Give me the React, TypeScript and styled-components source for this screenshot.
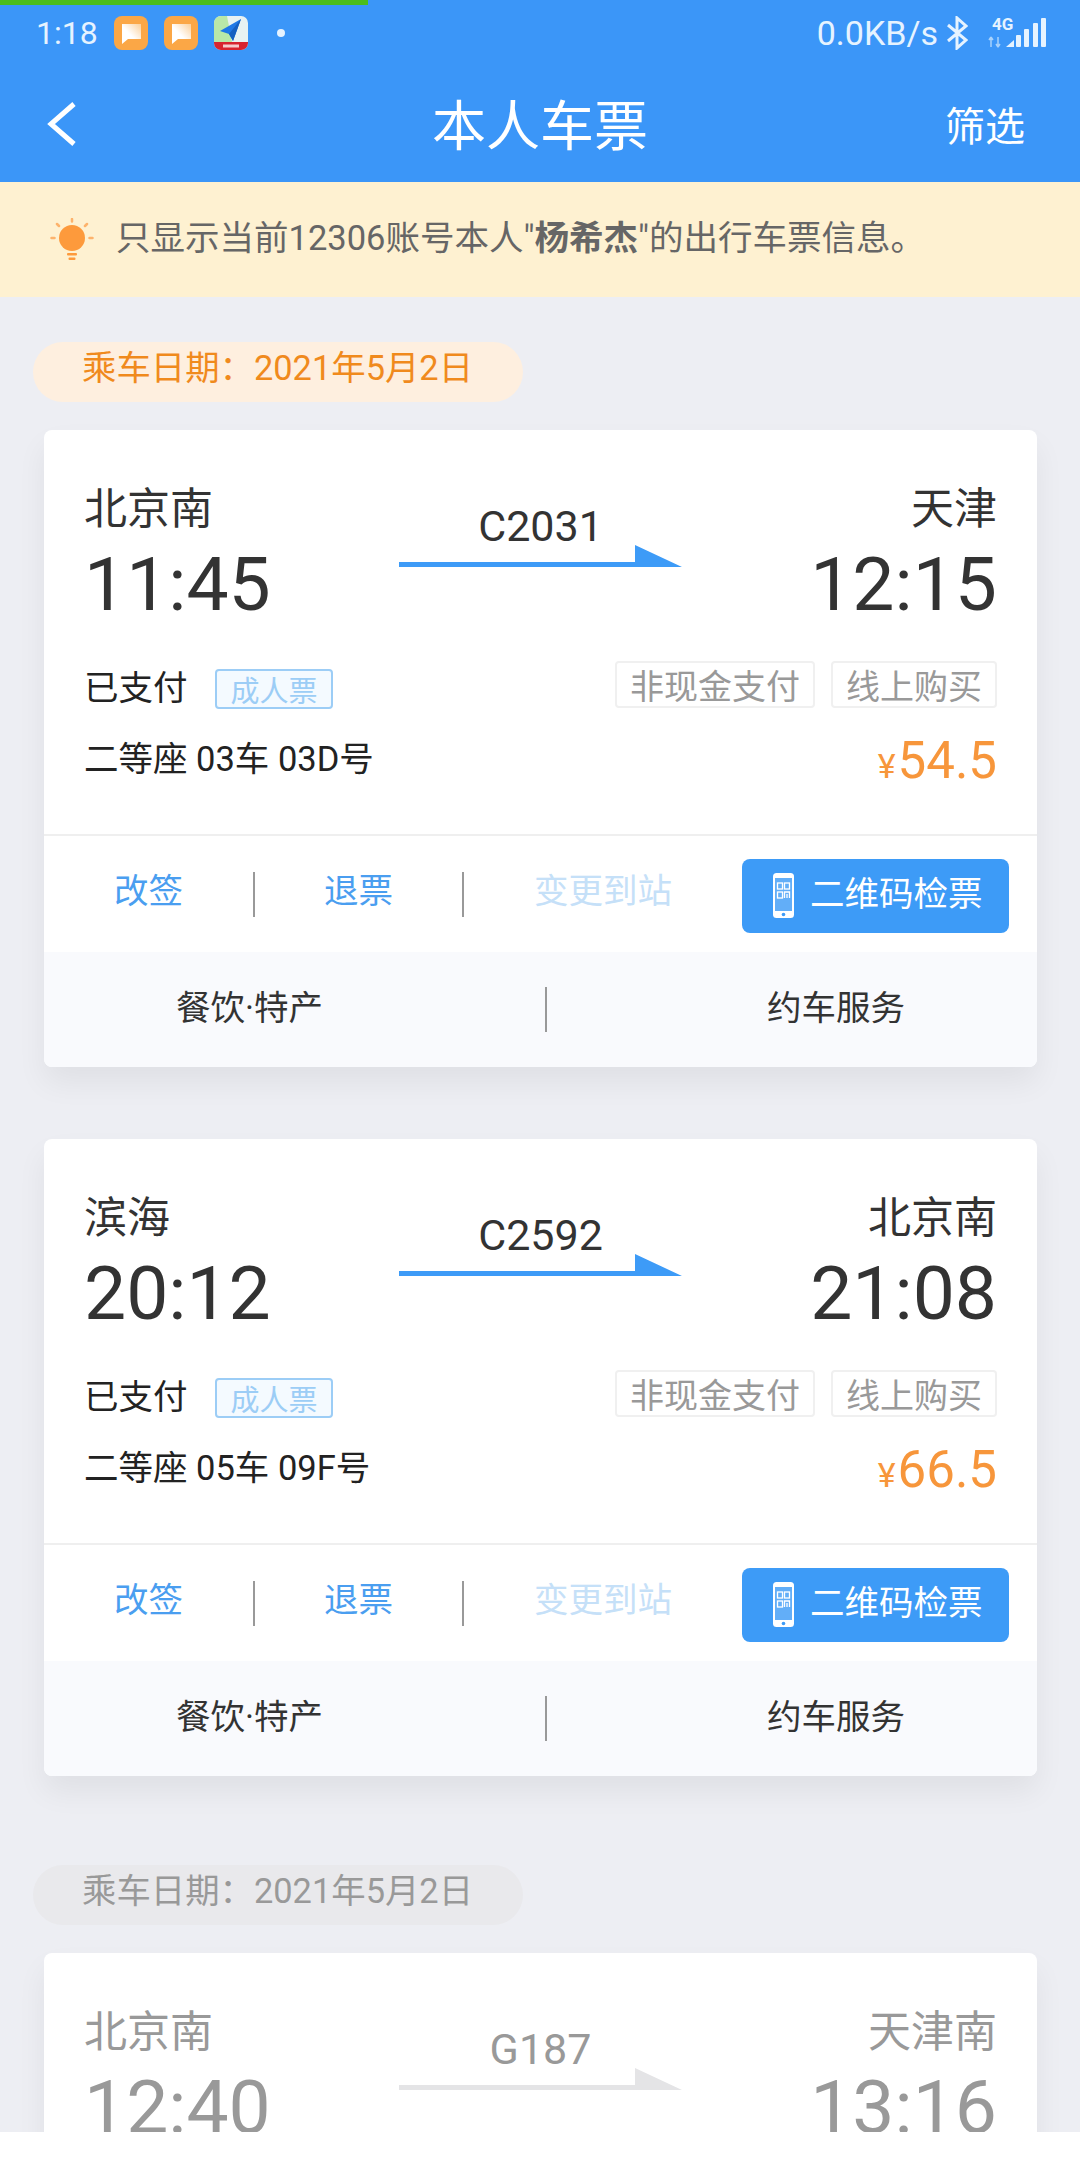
import React from 'react';
import styled, { createGlobalStyle } from 'styled-components';

type Ticket = {
    from: string;
    to: string;
    fromTime: string;
    toTime: string;
    train: string;
    seat?: string;
    price?: string;
};

const tickets: Ticket[] = [
    { from: '北京南', to: '天津', fromTime: '11:45', toTime: '12:15', train: 'C2031', seat: '二等座 03车 03D号', price: '54.5' },
    { from: '滨海', to: '北京南', fromTime: '20:12', toTime: '21:08', train: 'C2592', seat: '二等座 05车 09F号', price: '66.5' },
];

const pastTicket: Ticket = { from: '北京南', to: '天津南', fromTime: '12:40', toTime: '13:16', train: 'G187' };

const AppIcon = ({ plane }: { plane?: boolean }) =>
    plane ? (
        <svg width="34" height="34" viewBox="0 0 34 34">
            <rect width="34" height="34" rx="7" fill="#e8f2f2" />
            <path d="M0 7a7 7 0 0 1 7-7h6L18 26H0z" fill="#b9e8a8" />
            <path d="M0 26h34v1a7 7 0 0 1-7 7H7a7 7 0 0 1-7-7z" fill="#d8232f" />
            <path d="M27 3L6 15l9 3 4 7z" fill="#1f78e6" />
            <path d="M27 3L15 18l4 7z" fill="#155fc0" />
            <rect x="9" y="28.500" width="16" height="3" fill="#f6c9cc" />
        </svg>
    ) : (
        <svg width="34" height="34" viewBox="0 0 34 34">
            <defs>
                <linearGradient id="bubble" x1="0" y1="1" x2="1" y2="0">
                    <stop offset="0.450" stopColor="#fff" />
                    <stop offset="1" stopColor="#fbd09a" />
                </linearGradient>
            </defs>
            <rect width="34" height="34" rx="8" fill="#fba746" />
            <path d="M8 8h19v15H14l-6 5z" fill="url(#bubble)" />
        </svg>
    );

const Bluetooth = () => (
    <svg width="22" height="34" viewBox="0 0 22 34" fill="none" stroke="#e6f3ff" strokeWidth="3">
        <path d="M2 9l18 15-9 8V2l9 8L2 25" />
    </svg>
);

const Signal = () => (
    <svg width="58" height="34" viewBox="0 0 58 34">
        <text x="4" y="14" fontSize="17" fontWeight="700" fontFamily="Roboto" fill="#e6f3ff">
            4G
        </text>
        <path d="M3 31V21M3 21l-2 3M3 21l2 3M10 21v10M10 31l-2-3M10 31l2-3" stroke="#a8d2fb" strokeWidth="1.500" fill="none" />
        <path d="M18 31l8-7v7z" fill="#e6f3ff" />
        <rect x="28" y="19" width="5" height="12" rx="1" fill="#e6f3ff" />
        <rect x="36" y="13" width="5" height="18" rx="1" fill="#e6f3ff" />
        <rect x="45" y="7" width="5" height="24" rx="1" fill="#e6f3ff" />
        <rect x="53" y="2" width="5" height="29" rx="1" fill="#e6f3ff" />
    </svg>
);

const Bulb = () => (
    <svg width="44" height="44" viewBox="0 0 44 44">
        <circle cx="22" cy="20" r="13" fill="#fd9a3c" />
        <rect x="17" y="35" width="10" height="2.500" rx="1" fill="#fd9a3c" />
        <rect x="18.500" y="39.500" width="7" height="2.500" rx="1" fill="#fd9a3c" />
        <g stroke="#fdb36c" strokeWidth="2.500" strokeLinecap="round">
            <path d="M22 1v2.500M1.500 20h3M39.500 20h3M7 6l2 2M37 6l-2 2" />
        </g>
    </svg>
);

const Arrow = ({ color }: { color: string }) => (
    <svg width="283" height="22" viewBox="0 0 283 22">
        <path d="M0 17H236V0L283 22H0Z" fill={color} />
    </svg>
);

const QrPhone = () => (
    <svg width="21" height="45" viewBox="0 0 21 45">
        <rect width="21" height="45" rx="3.500" fill="#fff" />
        <rect x="2" y="5" width="17" height="33" fill="#62aef8" />
        <g fill="none" stroke="#fff" strokeWidth="1.300">
            <rect x="4.500" y="10" width="5" height="6" />
            <rect x="11.500" y="10" width="5" height="6" />
            <rect x="4.500" y="19" width="5" height="6" />
            <path d="M11.500 25v-6h5v6M14 21v4" />
        </g>
        <circle cx="10.500" cy="41.500" r="1.800" fill="#3d9bf7" />
    </svg>
);

const Route = ({ ticket, muted }: { ticket: Ticket; muted?: boolean }) => (
    <RouteRow $muted={muted}>
        <Stop>
            <StationName>{ticket.from}</StationName>
            <Time>{ticket.fromTime}</Time>
        </Stop>
        <Line>
            <TrainNo>{ticket.train}</TrainNo>
            <Arrow color={muted ? '#e4e4e6' : '#3d9bf7'} />
        </Line>
        <Stop $right>
            <StationName>{ticket.to}</StationName>
            <Time>{ticket.toTime}</Time>
        </Stop>
    </RouteRow>
);

const TicketCard = ({ ticket }: { ticket: Ticket }) => (
    <Card>
        <CardBody>
            <Route ticket={ticket} />
            <InfoGrid>
                <StatusLine>
                    <Paid>已支付</Paid>
                    <AdultTag>成人票</AdultTag>
                </StatusLine>
                <GreyTags>
                    <GreyTag>非现金支付</GreyTag>
                    <GreyTag>线上购买</GreyTag>
                </GreyTags>
                <Seat>{ticket.seat}</Seat>
                <Price>
                    <small>¥</small>
                    {ticket.price}
                </Price>
            </InfoGrid>
        </CardBody>
        <Actions>
            <ActionCell $width={211} $divided>
                改签
            </ActionCell>
            <ActionCell $width={209} $divided>
                退票
            </ActionCell>
            <ActionCell $width={278} $disabled>
                变更到站
            </ActionCell>
            <QrButton>
                <QrPhone />
                <span>二维码检票</span>
            </QrButton>
        </Actions>
        <Services>
            <ServiceCell $inset={132} $divided>
                餐饮·特产
            </ServiceCell>
            <ServiceCell $inset={220}>约车服务</ServiceCell>
        </Services>
    </Card>
);

export default function App() {
    return (
        <>
            <GlobalStyle />
            <Screen>
                <Header>
                    <ProgressBar />
                    <StatusBar>
                        <StatusTime>1:18</StatusTime>
                        <AppIcons>
                            <AppIcon />
                            <AppIcon />
                            <AppIcon plane />
                        </AppIcons>
                        <StatusDot />
                        <StatusRight>
                            <NetSpeed>0.0KB/s</NetSpeed>
                            <Bluetooth />
                            <Signal />
                        </StatusRight>
                    </StatusBar>
                    <NavBar>
                        <BackIcon width="30" height="44" viewBox="0 0 30 44" fill="none" stroke="#fff" strokeWidth="5">
                            <path d="M28 2L5 22l23 20" />
                        </BackIcon>
                        <NavTitle>本人车票</NavTitle>
                        <NavAction>筛选</NavAction>
                    </NavBar>
                </Header>
                <Notice>
                    <Bulb />
                    <NoticeText>
                        只显示当前12306账号本人"<b>杨希杰</b>"的出行车票信息。
                    </NoticeText>
                </Notice>
                <List>
                    <DatePill>乘车日期：2021年5月2日</DatePill>
                    {tickets.map((t) => (
                        <TicketCard ticket={t} key={t.train} />
                    ))}
                    <DatePill $muted>乘车日期：2021年5月2日</DatePill>
                    <Card>
                        <CardBody>
                            <Route ticket={pastTicket} muted />
                        </CardBody>
                    </Card>
                </List>
            </Screen>
        </>
    );
}

const GlobalStyle = createGlobalStyle`
    html, body {
        margin: 0;
        padding: 0;
        background: #fff;
        font-family: Roboto, "Noto Sans CJK SC", sans-serif;
    }
`;

const Screen = styled.div`
    width: 1080px;
    height: 2132px;
    overflow: hidden;
    background: #edeef3;
`;

const Header = styled.header`
    position: relative;
    height: 182px;
    background: #3b96f8;
    color: #fff;
`;

const ProgressBar = styled.div`
    position: absolute;
    top: 0;
    left: 0;
    width: 368px;
    height: 5px;
    background: #4bbd1c;
`;

const StatusBar = styled.div`
    display: flex;
    align-items: center;
    height: 66px;
    padding: 0 34px 0 36px;
    color: #e6f3ff;
`;

const StatusTime = styled.span`
    width: 78px;
    font-size: 32px;
`;

const AppIcons = styled.div`
    display: flex;
    gap: 16px;
`;

const StatusDot = styled.i`
    width: 8px;
    height: 8px;
    margin-left: 29px;
    border-radius: 50%;
    background: #e6f3ff;
`;

const StatusRight = styled.div`
    display: flex;
    align-items: center;
    margin-left: auto;

    svg:last-child {
        margin-left: 20px;
    }
`;

const NetSpeed = styled.span`
    margin-right: 8px;
    font-size: 34px;
`;

const NavBar = styled.div`
    display: grid;
    grid-template-columns: 1fr auto 1fr;
    align-items: center;
    height: 116px;
    padding: 0 55px;
`;

const BackIcon = styled.svg`
    margin-left: -9px;
`;

const NavTitle = styled.h1`
    margin: 0 0 3px;
    font-size: 54px;
    font-weight: 400;
`;

const NavAction = styled.span`
    justify-self: end;
    font-size: 40px;
`;

const Notice = styled.div`
    display: flex;
    align-items: center;
    gap: 22px;
    height: 115px;
    padding-left: 50px;
    background: #fef1d1;
    color: #666;
`;

const NoticeText = styled.span`
    margin-bottom: 10px;
    font-size: 34.5px;
`;

const List = styled.div`
    padding: 45px 43px 0 44px;
`;

const DatePill = styled.div<{ $muted?: boolean }>`
    display: flex;
    align-items: center;
    width: 490px;
    height: 60px;
    box-sizing: border-box;
    margin-left: -11px;
    margin-top: ${({ $muted }) => ($muted ? '89px' : '0')};
    padding: 0 0 14px 49px;
    border-radius: 30px;
    background: ${({ $muted }) => ($muted ? '#e9e9ec' : '#feefdf')};
    color: ${({ $muted }) => ($muted ? '#999' : '#f08a1d')};
    font-size: 34.4px;
`;

const Card = styled.section`
    margin-top: 28px;
    border-radius: 8px;
    background: #fff;
    box-shadow: 0 16px 30px rgba(0, 0, 0, 0.06);
    overflow: hidden;

    & + & {
        margin-top: 72px;
    }
`;

const CardBody = styled.div`
    height: 406px;
    padding: 54px 40px 0;
    box-sizing: border-box;
    border-bottom: 2px solid #efefef;
`;

const RouteRow = styled.div<{ $muted?: boolean }>`
    display: grid;
    grid-template-columns: 1fr auto 1fr;
    color: ${({ $muted }) => ($muted ? '#999' : '#333')};
`;

const Stop = styled.div<{ $right?: boolean }>`
    display: flex;
    flex-direction: column;
    align-items: ${({ $right }) => ($right ? 'flex-end' : 'flex-start')};
`;

const StationName = styled.span`
    font-size: 43px;
    line-height: 50px;
`;

const Time = styled.span`
    margin-top: 7px;
    font-size: 75px;
    line-height: 86px;
`;

const Line = styled.div`
    display: flex;
    flex-direction: column;
    align-items: center;
    padding-top: 18px;
`;

const TrainNo = styled.span`
    margin-bottom: -5px;
    font-size: 43px;
    line-height: 48px;
`;

const InfoGrid = styled.div`
    display: grid;
    grid-template-columns: 1fr auto;
    grid-template-rows: 47px 96px;
    margin-top: 34px;
`;

const StatusLine = styled.div`
    display: flex;
    align-items: center;
`;

const Paid = styled.span`
    width: 131px;
    font-size: 34.5px;
    color: #222;
`;

const AdultTag = styled.span`
    display: flex;
    align-items: center;
    justify-content: center;
    box-sizing: border-box;
    width: 118px;
    height: 40px;
    margin-top: 9px;
    border: 2px solid #9ccdf6;
    border-radius: 4px;
    background: #f4faff;
    color: #9ccdf6;
    font-size: 29px;
`;

const GreyTags = styled.div`
    display: flex;
    gap: 16px;
`;

const GreyTag = styled.span`
    display: flex;
    align-items: center;
    padding: 0 13px;
    border: 2px solid #f0f0f0;
    border-radius: 4px;
    color: #999;
    font-size: 34px;
`;

const Seat = styled.span`
    display: flex;
    align-items: center;
    font-size: 34.5px;
    color: #222;
`;

const Price = styled.span`
    display: flex;
    align-items: baseline;
    justify-content: flex-end;
    padding-top: 15px;
    color: #f7963b;
    font-size: 51px;
    line-height: 76px;

    small {
        font-size: 34px;
        margin-right: 2px;
    }
`;

const Actions = styled.div`
    display: flex;
    align-items: center;
    height: 116px;
`;

const ActionCell = styled.div<{ $width: number; $divided?: boolean; $disabled?: boolean }>`
    width: ${({ $width }) => $width}px;
    height: 45px;
    line-height: 39px;
    text-align: center;
    font-size: 34.5px;
    color: ${({ $disabled }) => ($disabled ? '#c5e0f8' : '#4a9ef0')};
    border-right: ${({ $divided }) => ($divided ? '2px solid #999' : 'none')};
    box-sizing: border-box;
`;

const QrButton = styled.button`
    display: flex;
    align-items: center;
    gap: 16px;
    width: 267px;
    height: 74px;
    margin-top: 3px;
    padding: 0 0 0 31px;
    border: none;
    border-radius: 8px;
    background: #3d9bf7;
    color: #fff;
    font: inherit;
    font-size: 34.5px;

    svg {
        flex: none;
    }

    span {
        margin-bottom: 10px;
    }
`;

const Services = styled.div`
    display: grid;
    grid-template-columns: 503px 1fr;
    align-items: center;
    height: 115px;
    background: #f9fafd;
`;

const ServiceCell = styled.div<{ $inset: number; $divided?: boolean }>`
    height: 45px;
    line-height: 42px;
    padding-left: ${({ $inset }) => $inset}px;
    font-size: 34.5px;
    color: #333;
    border-right: ${({ $divided }) => ($divided ? '2px solid #999' : 'none')};
`;
